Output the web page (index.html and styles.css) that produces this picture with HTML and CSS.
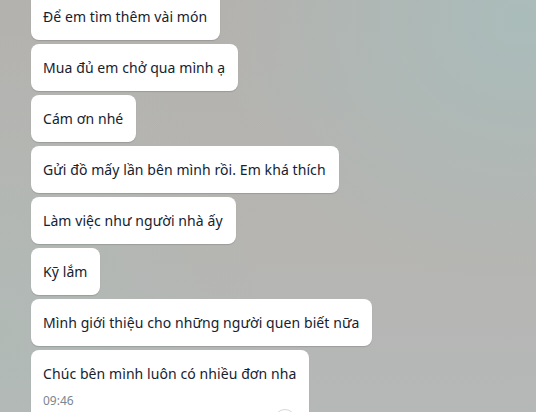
FILE: index.html
```html
<!DOCTYPE html>
<html lang="vi">
<head>
<meta charset="utf-8">
<title>Chat</title>
<link rel="stylesheet" href="styles.css">
</head>
<body>
<div class="chat">
  <div class="msg">Để em tìm thêm vài món</div>
  <div class="msg">Mua đủ em chở qua mình ạ</div>
  <div class="msg">Cám ơn nhé</div>
  <div class="msg">Gửi đồ mấy lần bên mình rồi. Em khá thích</div>
  <div class="msg">Làm việc như người nhà ấy</div>
  <div class="msg">Kỹ lắm</div>
  <div class="msg">Mình giới thiệu cho những người quen biết nữa</div>
  <div class="msg last">
    <div>Chúc bên mình luôn có nhiều đơn nha</div>
    <div class="time">09:46</div>
    <span class="react"></span>
  </div>
</div>
</body>
</html>
```

FILE: styles.css
```css
html, body {
  margin: 0;
  height: 100%;
  overflow: hidden;
}
body {
  background:
    radial-gradient(ellipse 300px 260px at 520px 20px, rgba(168, 190, 188, 0.85), rgba(168, 190, 188, 0) 100%),
    radial-gradient(ellipse 260px 300px at 0px 330px, rgba(176, 186, 182, 0.8), rgba(176, 186, 182, 0) 100%),
    linear-gradient(180deg, #b4b2af 0%, #b6b5b2 60%, #b5b8b8 100%);
  font-family: "Noto Sans", "Open Sans", sans-serif;
}
.chat {
  display: flex;
  flex-direction: column;
  align-items: flex-start;
  gap: 4px;
  padding-left: 31px;
  margin-top: -7px;
}
.msg {
  position: relative;
  background: #ffffff;
  border-radius: 8px;
  padding: 12px 13px 12px 12px;
  font-size: 14px;
  letter-spacing: 0.08px;
  line-height: 23px;
  color: #15222f;
  box-shadow: 0 1px 1px rgba(0, 0, 0, 0.14);
  white-space: nowrap;
}
.msg.last {
  padding-bottom: 20px;
}
.time {
  margin-top: 7px;
  font-size: 12px;
  line-height: 18px;
  letter-spacing: 0;
  color: #7b8691;
}
.react {
  position: absolute;
  right: 13px;
  top: 59px;
  width: 22px;
  height: 22px;
  border-radius: 50%;
  background: #ffffff;
  border: 1px solid #d3d8de;
  box-sizing: border-box;
}
```
